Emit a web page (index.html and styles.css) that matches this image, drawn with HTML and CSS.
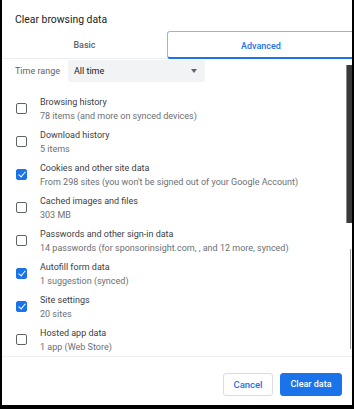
FILE: index.html
```html
<!DOCTYPE html>
<html>
	<head>
		<meta charset="UTF-8">
		<title>Clear browsing data</title>
		<link rel="stylesheet" href="styles.css">
	</head>
	<body>
		<div class="dialog">
			<div class="title">Clear browsing data</div>
			<div class="tabs">
				<div class="tab">Basic</div>
				<div class="tab active">Advanced</div>
			</div>
			<div class="body">
				<div class="range">
					<span class="range-label">Time range</span>
					<div class="select">
						All time
						<span class="arrow"></span>
					</div>
				</div>
				<ul class="list">
					<li>
						<span class="cb"></span>
						<div class="txt"><p>Browsing history</p><p class="sub">78 items (and more on synced devices)</p></div>
					</li>
					<li>
						<span class="cb"></span>
						<div class="txt"><p>Download history</p><p class="sub">5 items</p></div>
					</li>
					<li>
						<span class="cb on"></span>
						<div class="txt"><p>Cookies and other site data</p><p class="sub">From 298 sites (you won't be signed out of your Google Account)</p></div>
					</li>
					<li>
						<span class="cb"></span>
						<div class="txt"><p>Cached images and files</p><p class="sub">303 MB</p></div>
					</li>
					<li>
						<span class="cb"></span>
						<div class="txt"><p>Passwords and other sign-in data</p><p class="sub">14 passwords (for sponsorinsight.com, , and 12 more, synced)</p></div>
					</li>
					<li>
						<span class="cb on"></span>
						<div class="txt"><p>Autofill form data</p><p class="sub">1 suggestion (synced)</p></div>
					</li>
					<li>
						<span class="cb on"></span>
						<div class="txt"><p>Site settings</p><p class="sub">20 sites</p></div>
					</li>
					<li>
						<span class="cb"></span>
						<div class="txt"><p>Hosted app data</p><p class="sub">1 app (Web Store)</p></div>
					</li>
				</ul>
				<div class="thumb"></div>
				<div class="track"></div>
			</div>
			<div class="foot">
				<a href="javascript:;" class="btn">Cancel</a>
				<a href="javascript:;" class="btn primary">Clear data</a>
			</div>
		</div>
	</body>
</html>
```

FILE: styles.css
```css
body,ul,li,p{
	margin: 0;
	padding: 0;
}
body{
	background: #000;
	font-family: Roboto, "Liberation Sans", sans-serif;
	color: #202124;
}
li{
	list-style: none;
}
a{
	text-decoration: none;
}
.dialog{
	width: 350px;
	height: 405px;
	margin-left: 2px;
	background: #fff;
	display: flex;
	flex-direction: column;
	overflow: hidden;
}
.title{
	height: 31px;
	box-sizing: border-box;
	padding: 13px 0 0 13px;
	font-size: 10.4px;
	line-height: 13px;
	color: #202124;
}
.tabs{
	display: grid;
	grid-template-columns: 165px 1fr;
	height: 28px;
	margin-right: -3px;
}
.tab{
	display: flex;
	align-items: center;
	justify-content: center;
	font-size: 9px;
	font-weight: 500;
	color: #5f6368;
	border-bottom: 1px solid #eceef0;
}
.tab.active{
	color: #1a73e8;
	border: 1px solid #8ab4f8;
	border-bottom: 2px solid #1a73e8;
	border-radius: 3px;
	padding-top: 2px;
}
.body{
	flex: 1;
	position: relative;
	border-bottom: 1px solid #eceef0;
}
.range{
	display: flex;
	align-items: center;
	height: 22px;
	margin-top: 1px;
	padding-left: 13px;
	font-size: 9px;
}
.range-label{
	width: 53px;
	color: #5f6368;
}
.select{
	width: 131px;
	height: 22px;
	line-height: 22px;
	padding-left: 6px;
	background: #f1f3f4;
	border-radius: 3px;
	color: #202124;
	position: relative;
}
.arrow{
	position: absolute;
	right: 8px;
	top: 9px;
	border-left: 3.5px solid transparent;
	border-right: 3.5px solid transparent;
	border-top: 4px solid #5f6368;
}
.list{
	margin-top: 10px;
}
.list li{
	display: flex;
	align-items: center;
	height: 33px;
	padding-left: 14px;
}
.cb{
	width: 11px;
	height: 11px;
	box-sizing: border-box;
	border: 1.5px solid #5f6368;
	border-radius: 2px;
	margin-right: 13px;
	flex-shrink: 0;
	position: relative;
}
.cb.on{
	background: #1a73e8;
	border-color: #1a73e8;
}
.cb.on:after{
	content: '';
	position: absolute;
	left: 2.5px;
	top: 0px;
	width: 3px;
	height: 6px;
	border-right: 1.5px solid #fff;
	border-bottom: 1.5px solid #fff;
	transform: rotate(40deg);
}
.txt p{
	font-size: 9px;
	line-height: 14px;
	white-space: nowrap;
	color: #3c4043;
}
.txt .sub{
	color: #6b6f74;
}
.thumb{
	position: absolute;
	left: 344px;
	top: 6px;
	width: 5px;
	height: 158px;
	background: #3a3a3a;
	border-left: 1px solid #8a8a8a;
}
.track{
	position: absolute;
	left: 348px;
	top: 190px;
	width: 1px;
	height: 100px;
	background: #9a9a9a;
}
.foot{
	height: 48px;
	box-sizing: border-box;
	padding: 16px 10px 0 0;
	display: flex;
	justify-content: flex-end;
	align-items: flex-start;
	gap: 7px;
}
.btn{
	display: inline-block;
	height: 23px;
	line-height: 21px;
	box-sizing: border-box;
	border: 1px solid #dadce0;
	border-radius: 3px;
	font-size: 9.5px;
	font-weight: 500;
	color: #1a73e8;
	text-align: center;
	width: 50px;
}
.btn.primary{
	width: 62px;
	background: #1a73e8;
	border-color: #1a73e8;
	color: #fff;
	font-size: 9px;
}
```
